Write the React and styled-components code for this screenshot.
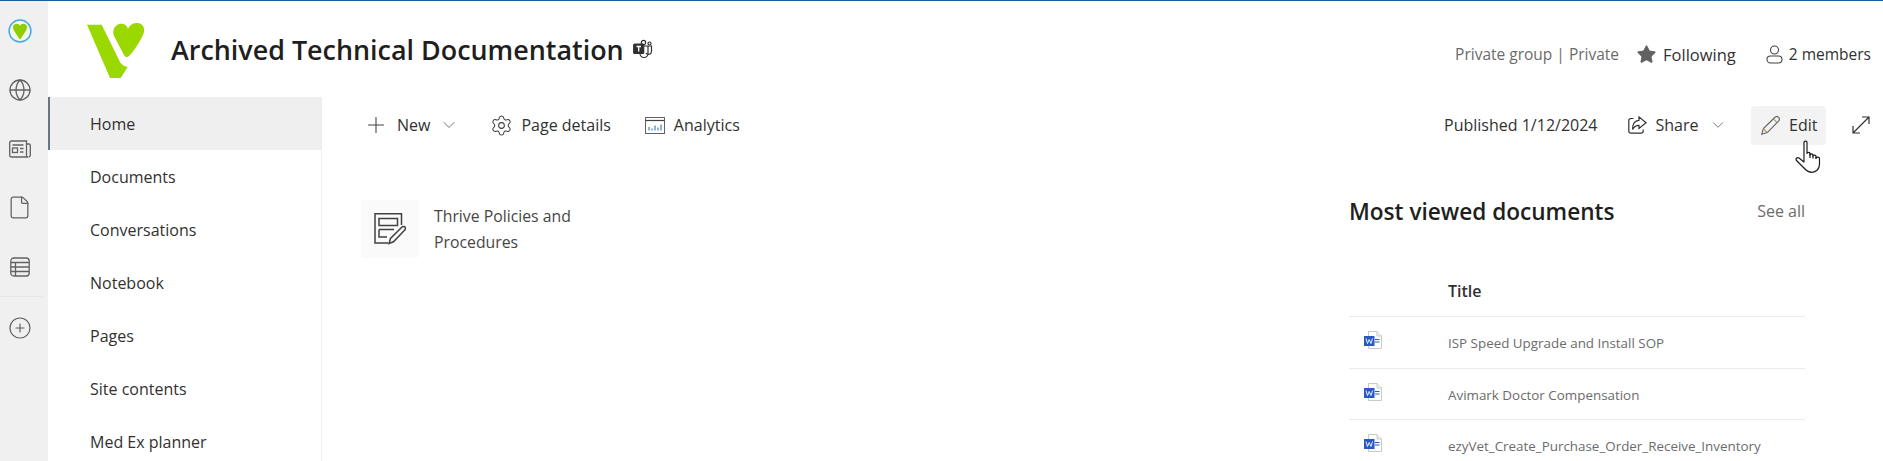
import React from "react";
import styled, { createGlobalStyle } from "styled-components";
import { ChevronDown, CirclePlus, File, Globe, Plus, Settings, Star } from "lucide-react";

const GlobalStyle = createGlobalStyle`
  html, body {
    margin: 0;
    height: 100%;
    overflow: hidden;
    background: #fff;
  }
  body {
    font-family: "Open Sans", "Noto Sans", "Liberation Sans", sans-serif;
    color: #323130;
  }
`;

const navItems = ["Home", "Documents", "Conversations", "Notebook", "Pages", "Site contents", "Med Ex planner"];
const docs = [
  "ISP Speed Upgrade and Install SOP",
  "Avimark Doctor Compensation",
  "ezyVet_Create_Purchase_Order_Receive_Inventory",
];

function VetLogo() {
  return (
    <LogoSvg viewBox="0 0 57 55">
      <path fill="#9bd800" d="M0 1.7H14.7L33 39Q35 43 40.7 44L33.7 55H23Z" />
      <path
        fill="#9bd800"
        d="M41 6C43 1 47 0 50 0C55 0 58 4 57 9C56 14 46 30 42 33C40 35 38 34 37 32L27 13C25 9 27 2 33 .8C37 0 40 2 41 6Z"
      />
    </LogoSvg>
  );
}

function SiteBadge() {
  return (
    <svg width="24" height="24" viewBox="0 0 24 24">
      <circle cx="12" cy="12" r="10.9" fill="#f3f7ea" stroke="#45a9e8" strokeWidth="1.5" />
      <path
        fill="#8fce00"
        d="M12 7C11 4 5.500 4 5 8C4.700 11 9.500 16.500 11 19.500C11.500 20.300 12.500 20.300 13 19.500C14.500 16.500 19.300 11 19 8C18.500 4 13 4 12 7Z"
      />
    </svg>
  );
}

function NewsIcon() {
  return (
    <svg width="22" height="18" viewBox="0 0 22 18" fill="none" stroke="#616161" strokeWidth="1.300">
      <path d="M2.500 1H17.500V15.500C17.500 16.300 18.200 17 19 17H2.500C1.500 17 .7 16.200 .7 15.200V2.800C.7 1.800 1.500 1 2.500 1Z" />
      <path d="M17.500 4H19.800C20.700 4 21.300 4.600 21.300 5.500V15.200C21.300 16.200 20.500 17 19.500 17" />
      <rect x="3.500" y="8" width="5" height="4.500" />
      <path d="M3.500 5H14.500M11 8.500H14.500M11 12H14.500" />
    </svg>
  );
}

function ListIcon() {
  return (
    <svg width="20" height="20" viewBox="0 0 20 20" fill="none" stroke="#616161" strokeWidth="1.300">
      <rect x=".8" y="1" width="18.400" height="18" rx="3" />
      <path d="M1 5.500H19M1 10H19M1 14.500H19M5.500 5.500V19" />
    </svg>
  );
}

function TeamsIcon() {
  return (
    <svg width="20" height="20" viewBox="0 0 20 20" fill="none" stroke="#323130" strokeWidth="1.200">
      <circle cx="10.500" cy="3.500" r="2.200" />
      <circle cx="16.500" cy="4.500" r="1.500" />
      <path d="M7 7H18.500V12.500A3 3 0 0 1 13 14" />
      <path d="M7 10V14.500A4 4 0 0 0 15 14.500V7" />
      <rect x=".7" y="5" width="10" height="9.500" rx="1" fill="#323130" />
      <path d="M3.500 7.500H8M5.700 7.500V12.500" stroke="#fff" strokeWidth="1.300" />
    </svg>
  );
}

function AnalyticsIcon() {
  return (
    <svg width="20" height="17" viewBox="0 0 20 17" fill="none" stroke="#616161">
      <rect x=".5" y=".5" width="19" height="16" strokeWidth="1" />
      <path d="M.5 3.500H19.500" strokeWidth="1.200" stroke="#424242" />
      <path d="M4 13.500V10M7 13.500V11.500M10 13.500V8.500M13 13.500V10.500M16 13.500V7.500" stroke="#1c64b8" />
    </svg>
  );
}

function EditFormIcon() {
  return (
    <svg width="32" height="32" viewBox="0 0 32 32" fill="none" stroke="#424242" strokeWidth="1.500">
      <path d="M14 30H1V.8H27.500V12" />
      <path d="M5 5.500H23.500V12.500H5ZM5 16.500H20M5 16.500V24H13" />
      <path d="M15 30.500L16.500 25.500L27.500 14.500C28.700 13.300 30.400 13.300 31 14C31.800 15 31.500 16.300 30.500 17.300L19.500 28.800Z" />
    </svg>
  );
}

function PersonIcon() {
  return (
    <svg width="17" height="19" viewBox="0 0 17 19" fill="none" stroke="#424242" strokeWidth="1.100">
      <circle cx="8.500" cy="5" r="4" />
      <rect x="1" y="11" width="15" height="7" rx="3.500" />
    </svg>
  );
}

function ShareIcon() {
  return (
    <svg width="19" height="18" viewBox="0 0 19 18" fill="none" stroke="#323130" strokeWidth="1.200">
      <path d="M5.500 2.500H3C1.700 2.500 .8 3.400 .8 4.700V15C.8 16.300 1.700 17.200 3 17.200H13C14.300 17.200 15.200 16.300 15.200 15V13.500" />
      <path d="M11 .9L18 6.800L11 12.500V9.300C8 9.300 6 10.500 4.500 13.500C4.500 8 7 4.500 11 4.300Z" />
    </svg>
  );
}

function PencilIcon() {
  return (
    <svg width="19" height="19" viewBox="0 0 19 19" fill="none" stroke="#5f5f5f" strokeWidth="1.100">
      <path d="M.8 18.200L2.400 12.600L13.700 1.500C14.800 .4 16.500 .4 17.500 1.400C18.600 2.500 18.500 4.100 17.500 5.200L6.300 16.600Z" />
      <path d="M12.400 2.900L16.100 6.600M2.400 12.600L6.300 16.600" stroke="#b08d66" />
    </svg>
  );
}

function ExpandIcon() {
  return (
    <svg width="18" height="18" viewBox="0 0 18 18" fill="none" stroke="#323130" strokeWidth="1.200">
      <path d="M1 17L17 1M10 1H17V8M1 10V17H8" />
    </svg>
  );
}

function WordIcon() {
  return (
    <svg width="18" height="18" viewBox="0 0 18 18">
      <path d="M4.500 .5H13L17.500 5V17.500H4.500Z" fill="#fff" stroke="#c8c8c8" />
      <path d="M13 .5V5H17.500" fill="#f1f1f1" stroke="#c8c8c8" />
      <path d="M11 8.500H15.500M11 11H15.500" stroke="#2b5cc4" strokeWidth="1.100" />
      <rect x="0" y="5" width="10.500" height="10" fill="#2b59c3" />
      <path d="M2 7.500L3.500 12.500L5.200 8.500L7 12.500L8.500 7.500" fill="none" stroke="#fff" strokeWidth=".9" />
    </svg>
  );
}

function HandCursor() {
  return (
    <svg width="26" height="33" viewBox="0 0 26 33" fill="#fff" stroke="#1b1b1b" strokeWidth="1.200" strokeLinejoin="round">
      <path d="M9 2.300C9 .6 12 .6 12 2.300V13.500C12 12 15 12 15 13.500V15C15 13.600 18 13.600 18 15V16C18 14.800 21 14.800 21 16.200V18C21 16.800 24.500 16.800 24.500 18.500V24C24.500 29 21 32.300 17 32.300C13 32.300 11 30.500 8.500 27.500L1.500 20.500C.3 19 2 16.800 4 18L9 22Z" />
      <path d="M15 13.500V18M18 15V18.500M21 17V19" fill="none" />
    </svg>
  );
}

export default function App() {
  return (
    <Page>
      <GlobalStyle />
      <TopLine />
      <Shell>
        <Rail>
          <RailItem><SiteBadge /></RailItem>
          <RailItem><Globe size={24} strokeWidth={1.3} color="#616161" /></RailItem>
          <RailItem><NewsIcon /></RailItem>
          <RailItem><File size={25} strokeWidth={1.200} color="#616161" /></RailItem>
          <RailItem><ListIcon /></RailItem>
          <RailDivider />
          <RailItem><CirclePlus size={24} strokeWidth={1.200} color="#616161" /></RailItem>
        </Rail>
        <Main>
          <Header>
            <VetLogo />
            <SiteTitle>Archived Technical Documentation</SiteTitle>
            <TeamsIcon />
            <HeaderMeta>
              <MutedText>Private group | Private</MutedText>
              <MetaItem $gap={6} $left={17} $size={16.5}>
                <Star size={21} fill="#616161" color="#616161" strokeWidth={1} />
                Following
              </MetaItem>
              <MetaItem $gap={6} $left={30}>
                <PersonIcon />
                2 members
              </MetaItem>
            </HeaderMeta>
          </Header>
          <Columns>
            <Nav>
              {navItems.map((item, i) => (
                <NavRow key={item} $active={i === 0}>{item}</NavRow>
              ))}
            </Nav>
            <Workspace>
              <Toolbar>
                <ToolGroup>
                  <ToolItem $gap={8} $right={-3}>
                    <Plus size={26} strokeWidth={1} color="#424242" />
                    New
                    <Chevron size={20} strokeWidth={1.200} color="#767676" />
                  </ToolItem>
                  <ToolItem $gap={8}>
                    <Settings size={23} strokeWidth={1.100} color="#424242" />
                    Page details
                  </ToolItem>
                  <ToolItem $gap={9}>
                    <AnalyticsIcon />
                    Analytics
                  </ToolItem>
                </ToolGroup>
                <ToolGroupRight>
                  <ToolItem>Published 1/12/2024</ToolItem>
                  <ToolItem $gap={9} $left={1} $right={-4.5}>
                    <ShareIcon />
                    Share
                    <Chevron size={18} strokeWidth={1.300} color="#767676" />
                  </ToolItem>
                  <EditButton>
                    <PencilIcon />
                    Edit
                    <CursorSpot><HandCursor /></CursorSpot>
                  </EditButton>
                  <ToolItem $left={-3}><ExpandIcon /></ToolItem>
                </ToolGroupRight>
              </Toolbar>
              <Content>
                <QuickLink>
                  <Tile><EditFormIcon /></Tile>
                  <QuickLabel>Thrive Policies and Procedures</QuickLabel>
                </QuickLink>
                <DocsPanel>
                  <DocsHeading>
                    <DocsTitle>Most viewed documents</DocsTitle>
                    <SeeAll>See all</SeeAll>
                  </DocsHeading>
                  <DocsHeadRow>Title</DocsHeadRow>
                  {docs.map((doc) => (
                    <DocRow key={doc}>
                      <WordIcon />
                      <DocName>{doc}</DocName>
                    </DocRow>
                  ))}
                </DocsPanel>
              </Content>
            </Workspace>
          </Columns>
        </Main>
      </Shell>
    </Page>
  );
}

const Page = styled.div`
  height: 461px;
  width: 1883px;
  display: flex;
  flex-direction: column;
  overflow: hidden;
`;

const TopLine = styled.div`
  height: 1px;
  flex: none;
  background: #1a5c9e;
`;

const Shell = styled.div`
  flex: 1;
  display: flex;
  min-height: 0;
`;

const Rail = styled.aside`
  width: 48px;
  flex: none;
  background: #f0f0f0;
`;

const RailItem = styled.div`
  width: 39px;
  height: 59px;
  display: flex;
  align-items: center;
  justify-content: center;
`;

const RailDivider = styled.div`
  height: 1px;
  width: 43px;
  margin-bottom: 1px;
  background: #e8e8e8;
`;

const Main = styled.div`
  flex: 1;
  min-width: 0;
  display: flex;
  flex-direction: column;
`;

const Header = styled.header`
  height: 96px;
  flex: none;
  display: flex;
  align-items: center;
  padding: 0 12px 0 39px;
`;

const LogoSvg = styled.svg`
  width: 57px;
  height: 55px;
  flex: none;
  margin: 3px 27px 0 0;
`;

const SiteTitle = styled.h1`
  margin: 0 9px 0 0;
  font-size: 26.900px;
  font-weight: 600;
  color: #201f1e;
  white-space: nowrap;
`;

const HeaderMeta = styled.div`
  margin: 10px 0 0 auto;
  display: flex;
  align-items: center;
  font-size: 15.500px;
`;

const MutedText = styled.span`
  font-size: 15.500px;
  color: #6b6b6b;
`;

const SeeAll = styled(MutedText)`
  font-size: 16px;
`;

const MetaItem = styled.span`
  display: flex;
  align-items: center;
  gap: ${(p) => p.$gap}px;
  margin-left: ${(p) => p.$left}px;
  font-size: ${(p) => p.$size || 15.5}px;
`;

const Columns = styled.div`
  flex: 1;
  min-height: 0;
  display: flex;
`;

const Nav = styled.nav`
  width: 273px;
  flex: none;
  border-right: 1px solid #eeeeee;
`;

const NavRow = styled.div`
  height: 53px;
  display: flex;
  align-items: center;
  padding-left: ${(p) => (p.$active ? 40 : 42)}px;
  font-size: 16px;
  color: #323130;
  font-weight: ${(p) => (p.$active ? 500 : 400)};
  background: ${(p) => (p.$active ? "#efefef" : "transparent")};
  border-left: ${(p) => (p.$active ? "2px solid #69767f" : "none")};
`;

const Workspace = styled.main`
  flex: 1;
  min-width: 0;
`;

const Toolbar = styled.div`
  height: 56px;
  display: flex;
  align-items: center;
  justify-content: space-between;
  padding: 0 13px 0 41px;
`;

const ToolGroup = styled.div`
  display: flex;
  align-items: center;
  gap: 34px;
`;

const ToolGroupRight = styled(ToolGroup)`
  gap: 29px;
`;

const ToolItem = styled.div`
  display: flex;
  align-items: center;
  gap: ${(p) => p.$gap || 0}px;
  margin-left: ${(p) => p.$left || 0}px;
  margin-right: ${(p) => p.$right || 0}px;
  font-size: 16px;
  color: #323130;
  white-space: nowrap;
`;

const Chevron = styled(ChevronDown)`
  margin-left: 1px;
`;

const EditButton = styled.div`
  position: relative;
  width: 75px;
  height: 39px;
  box-sizing: border-box;
  padding-left: 10px;
  display: flex;
  align-items: center;
  gap: 9px;
  font-size: 16px;
  color: #323130;
  background: #f3f3f3;
  border-radius: 4px;
`;

const CursorSpot = styled.span`
  position: absolute;
  left: 44px;
  top: 34px;
  line-height: 0;
`;

const Content = styled.div`
  display: flex;
  justify-content: space-between;
  align-items: flex-start;
  padding: 43px 78px 0 39px;
`;

const QuickLink = styled.div`
  margin-top: 4px;
  display: flex;
  gap: 15px;
`;

const Tile = styled.div`
  width: 58px;
  height: 58px;
  display: flex;
  align-items: center;
  justify-content: center;
  background: #fafafa;
  border-radius: 4px;
`;

const QuickLabel = styled.div`
  width: 170px;
  padding-top: 3px;
  font-size: 15.800px;
  line-height: 26px;
  color: #484644;
`;

const DocsPanel = styled.section`
  width: 456px;
`;

const DocsHeading = styled.div`
  height: 30px;
  display: flex;
  align-items: center;
  justify-content: space-between;
`;

const DocsTitle = styled.h2`
  margin: 0;
  font-size: 22.600px;
  font-weight: 600;
  color: #201f1e;
`;

const DocsHeadRow = styled.div`
  margin-top: 39px;
  height: 52px;
  box-sizing: border-box;
  display: flex;
  align-items: center;
  padding-left: 99px;
  font-size: 16px;
  font-weight: 600;
  color: #323130;
  border-bottom: 1px solid #ebebeb;
`;

const DocRow = styled.div`
  height: 51.500px;
  box-sizing: border-box;
  display: grid;
  grid-template-columns: 84px 1fr;
  padding: 14px 0 0 15px;
  border-bottom: 1px solid #ebebeb;
`;

const DocName = styled.span`
  font-size: 13.400px;
  line-height: 24px;
  color: #6b6b6b;
  white-space: nowrap;
`;
